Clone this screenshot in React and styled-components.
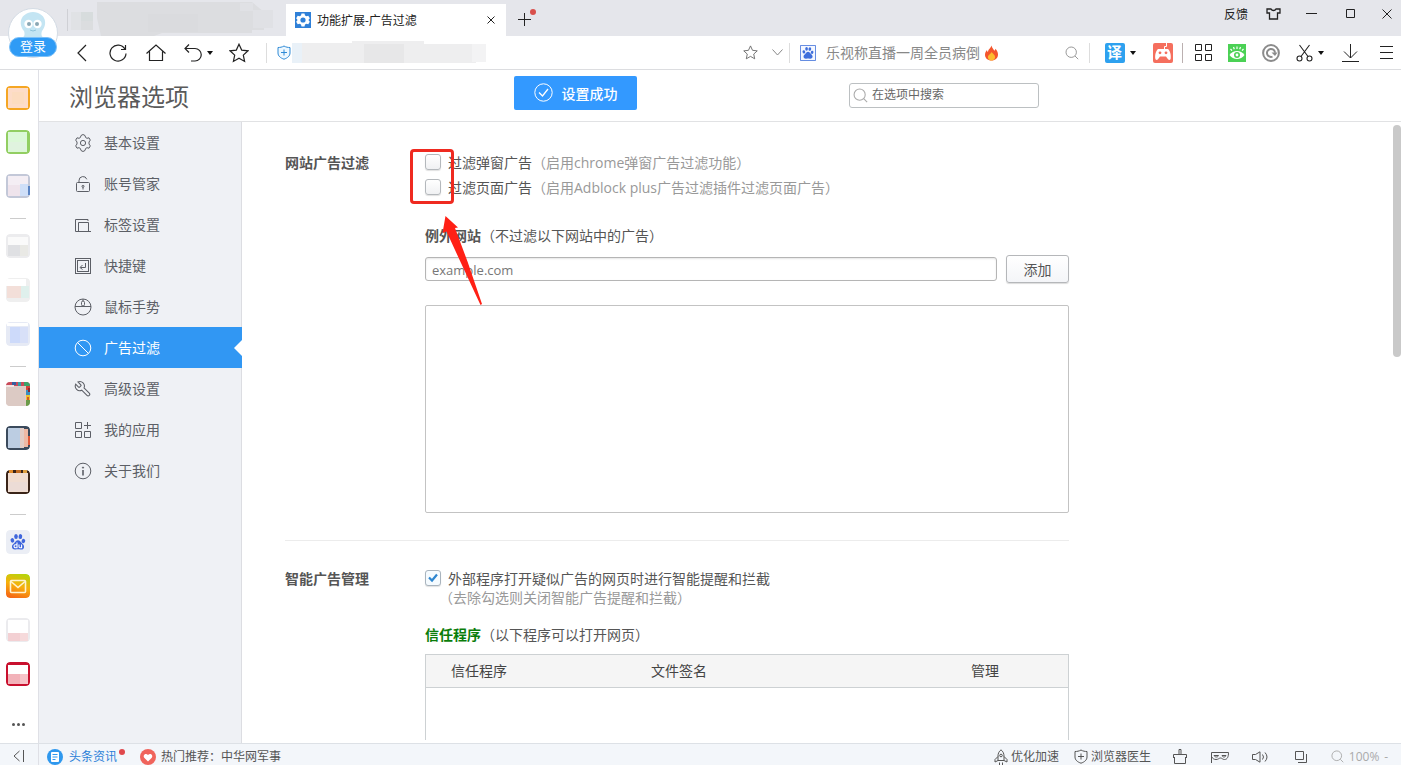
import React, { useState } from "react";
import styled, { createGlobalStyle, css } from "styled-components";

const GlobalStyle = createGlobalStyle`
  *, *::before, *::after { box-sizing: border-box; }
  html, body, #root { height: 100%; }
  body { margin: 0; background: #fff; }
  body, button, input, textarea {
    font-family: "Open Sans", "Noto Sans CJK SC", sans-serif;
    font-size: 14px;
    color: #555;
  }
`;

/* ---------- shared parts ---------- */

const Browser = styled.div`
  display: flex;
  flex-direction: column;
  height: 100vh;
  overflow: hidden;
`;

const Icon = styled.svg.attrs((p) => ({
  fill: p.fill || "none",
  stroke: p.stroke || "currentColor",
  "aria-hidden": true,
}))`
  display: block;
  flex: none;
`;

const IconButton = styled.button`
  display: flex;
  align-items: center;
  justify-content: center;
  gap: 5px;
  flex: none;
  width: ${(p) => p.$w}px;
  height: 100%;
  padding: 0 0 0 ${(p) => p.$indent || 0}px;
  border: 0;
  background: none;
  color: ${(p) => p.$color || "#222"};
  font-size: 12px;
  white-space: nowrap;
`;

const Divider = styled.span`
  flex: none;
  width: 1px;
  height: 20px;
  margin-right: ${(p) => p.$after || 0}px;
  background: ${(p) => p.$color || "#ddd"};
`;

/* ---------- title bar ---------- */

const TitleBar = styled.header`
  position: relative;
  display: flex;
  flex: none;
  height: 36px;
  padding-left: 66px;
  background: #e5e6eb;
`;

const Login = styled.button`
  position: absolute;
  z-index: 2;
  top: 8px;
  left: 8px;
  width: 50px;
  height: 50px;
  padding: 0;
  border: 0;
  background: none;
`;

const LoginLabel = styled.span`
  position: absolute;
  left: 1px;
  right: 1px;
  bottom: 1px;
  height: 20px;
  border: 1px solid #7cc0f8;
  border-radius: 10px;
  background: #2f9bf5;
  color: #fff;
  font-size: 13px;
  line-height: 17px;
  text-align: center;
`;

const BackTab = styled.div`
  flex: none;
  width: 220px;
  overflow: hidden;
`;

const Tab = styled.div`
  display: flex;
  align-items: center;
  align-self: flex-end;
  gap: 6px;
  width: 220px;
  height: 32px;
  padding: 0 2px 0 9px;
  background: #fff;
  color: #222;
  font-size: 12px;
  white-space: nowrap;
`;

const TabTitle = styled.span`
  flex: 1;
`;

const NewTab = styled(IconButton)`
  position: relative;
  padding-top: 3px;
  &::after {
    content: "";
    position: absolute;
    top: 9px;
    right: 6px;
    width: 6px;
    height: 6px;
    border-radius: 3px;
    background: #d9504c;
  }
`;

const WindowControls = styled.div`
  display: flex;
  height: 27px;
  margin-left: auto;
`;

/* ---------- toolbar ---------- */

const Toolbar = styled.nav`
  display: flex;
  align-items: center;
  flex: none;
  height: 34px;
  padding-left: 64px;
  border-bottom: 1px solid #dcdde0;
  background: #fff;
`;

const Address = styled.div`
  display: flex;
  align-items: center;
  flex: 1;
  min-width: 0;
  margin-left: 8px;
  overflow: hidden;
`;

const HotSearch = styled.label`
  display: flex;
  align-items: center;
  flex: none;
  width: 264px;
  padding-left: 10px;
`;

const HotInput = styled.input`
  width: 158px;
  margin-left: 10px;
  padding: 0;
  border: 0;
  outline: 0;
  background: none;
  &::placeholder { color: #888; opacity: 1; }
`;

const Translate = styled.span`
  width: 20px;
  height: 20px;
  border-radius: 2px;
  background: #2ea1ef;
  color: #fff;
  font-size: 15px;
  font-weight: 700;
  line-height: 19px;
  text-align: center;
`;

/* ---------- left rail ---------- */

const Middle = styled.div`
  display: flex;
  flex: 1;
  min-height: 0;
`;

const Rail = styled.aside`
  display: flex;
  flex-direction: column;
  flex: none;
  width: 39px;
  padding: 16px 2px 11px 0;
  border-right: 1px solid #dfe0e6;
  align-items: center;
`;

const RailGroup = styled.div`
  display: flex;
  flex-direction: column;
  gap: 20px;
  & + & {
    margin-top: 20px;
    padding-top: 16px;
    background: linear-gradient(#ccc, #ccc) top center / 16px 1px no-repeat;
  }
`;

const RailButton = styled.button`
  display: block;
  width: 24px;
  height: 24px;
  padding: 0;
  border: 0;
  border-radius: 4px;
  overflow: hidden;
  background: none;
`;

const RailMore = styled.button`
  margin-top: auto;
  padding: 6px;
  border: 0;
  background: none;
  color: #555;
`;

/* ---------- options page ---------- */

const Page = styled.div`
  display: flex;
  flex: 1;
  flex-direction: column;
  min-width: 0;
`;

const PageHeader = styled.div`
  flex: none;
  height: 52px;
  border-bottom: 1px solid #e1e2e4;
`;

const PageHeaderInner = styled.div`
  display: grid;
  grid-template-columns: 445px 123px 1fr;
  align-items: center;
  max-width: 1030px;
  height: 50px;
  padding: 0 30px;
`;

const PageTitle = styled.h1`
  margin: 0;
  padding-top: 4px;
  color: #5a5a5a;
  font-size: 24px;
  font-weight: 400;
  line-height: 36px;
`;

const Toast = styled.div`
  display: flex;
  align-items: center;
  align-self: start;
  justify-content: center;
  gap: 9px;
  height: 34px;
  margin-top: 6px;
  padding-bottom: 1px;
  border-radius: 2px;
  background: #3399ff;
  color: #fff;
  font-weight: 500;
`;

const Field = styled.label`
  display: flex;
  align-items: center;
  justify-self: end;
  width: 190px;
  height: 25px;
  gap: 4px;
  padding: 0 3px;
  border: 1px solid #bcc0c2;
  border-radius: 3px;
`;

const FieldInput = styled.input`
  flex: 1;
  min-width: 0;
  padding: 0 0 2px;
  border: 0;
  outline: 0;
  background: none;
  font-size: 12px;
  &::placeholder { color: #666; opacity: 1; }
`;

const PageBody = styled.div`
  display: flex;
  flex: 1;
  min-height: 0;
`;

const SideMenu = styled.nav`
  flex: none;
  width: 203px;
  border-right: 1px solid #dcdde2;
  background: #eff1f5;
`;

const MenuItem = styled.a`
  position: relative;
  display: flex;
  align-items: center;
  gap: 12px;
  height: 41px;
  padding-left: 35px;
  color: #5c5f66;
  text-decoration: none;
  ${(p) =>
    p.$active &&
    css`
      margin-right: -1px;
      background: #3197f3;
      color: #fff;
      &::after {
        content: "";
        position: absolute;
        right: 0;
        top: 13px;
        border: solid transparent;
        border-width: 8px 8px 8px 0;
        border-right-color: #fff;
      }
    `}
`;

const MenuText = styled.span`
  padding-bottom: 2px;
`;

const Content = styled.main`
  position: relative;
  flex: 1;
  min-width: 0;
  margin-bottom: 3px;
  padding-left: 43px;
  overflow: hidden;
`;

const Section = styled.section`
  display: grid;
  grid-template-columns: 140px 1fr;
  max-width: 784px;
  padding: ${(p) => p.$top}px 0 27px;
  & + & { border-top: 1px solid #ececec; }
`;

const SectionTitle = styled.h2`
  margin: 0;
  font-size: 14px;
  font-weight: 700;
  line-height: 25px;
`;

const SectionBody = styled.div`
  min-width: 0;
`;

const CheckRow = styled.label`
  display: flex;
  align-items: center;
  height: 25px;
  padding-bottom: 2px;
  white-space: nowrap;
`;

const Checkbox = styled.input.attrs({ type: "checkbox" })`
  appearance: none;
  flex: none;
  width: 16px;
  height: 16px;
  margin: 0 7px 0 0;
  border: 1px solid #b4b8bc;
  border-radius: 3px;
  background: linear-gradient(#fff, #f0f1f3);
  box-shadow: 0 1px 1px rgba(0, 0, 0, 0.12);
  &:checked {
    border-color: #a9b4be;
    background: #f5fbff
      url("data:image/svg+xml,%3Csvg xmlns='http://www.w3.org/2000/svg' viewBox='0 0 14 14'%3E%3Cpath d='M3 6.5l3 3 5-6' fill='none' stroke='%232d86d0' stroke-width='2.2'/%3E%3C/svg%3E")
      center / 14px 14px no-repeat;
  }
`;

const Muted = styled.span`
  color: #999;
`;

const Note = styled.p`
  margin: 0;
  padding-left: 14px;
  color: #999;
  line-height: 13px;
`;

const SubTitle = styled.h3`
  margin: ${(p) => p.$top}px 0 8px;
  font-size: 14px;
  font-weight: 400;
  line-height: 23px;
`;

const Strong = styled.strong`
  color: ${(p) => p.$color || "inherit"};
`;

const AddRow = styled.form`
  display: flex;
  align-items: center;
  gap: 9px;
`;

const SiteInput = styled.input`
  flex: 1;
  min-width: 0;
  height: 24px;
  padding: 2px 6px 0;
  border: 1px solid #b5b5b5;
  border-radius: 3px;
  outline: 0;
  box-shadow: inset 0 1px 2px rgba(0, 0, 0, 0.1);
  font-size: 13px;
  &::placeholder { color: #777; opacity: 1; }
`;

const AddButton = styled.button`
  width: 63px;
  height: 28px;
  padding: 0;
  border: 1px solid #b5b7ba;
  border-radius: 3px;
  background: linear-gradient(#fff, #f4f5f8);
  box-shadow: 0 1px 1px rgba(0, 0, 0, 0.14);
`;

const SiteList = styled.textarea`
  display: block;
  width: 100%;
  height: 208px;
  margin-top: 22px;
  border: 1px solid #c3c3c3;
  border-radius: 2px;
  outline: 0;
  resize: none;
`;

const ProgramTable = styled.table`
  width: 100%;
  border: 1px solid #cdd1d3;
  border-spacing: 0;
  table-layout: fixed;
  color: #444;
`;

const Th = styled.th`
  width: ${(p) => (p.$w ? `${p.$w}px` : "auto")};
  height: 33px;
  padding: 0 0 2px 25px;
  border-bottom: 1px solid #cdd1d3;
  background: #f5f5f5;
  font-weight: 400;
  text-align: left;
`;

const EmptyCell = styled.td`
  height: 180px;
`;

const ScrollThumb = styled.div`
  flex: none;
  width: 8px;
  height: 232px;
  margin-top: 3px;
  border-radius: 4px;
  background: #c9c9c9;
`;

const Highlight = styled.div`
  position: absolute;
  left: 168px;
  top: 27px;
  width: 44px;
  height: 55px;
  border: 3px solid #ef2a20;
  border-radius: 4px;
  pointer-events: none;
`;

const Arrow = styled.svg`
  position: absolute;
  left: 198px;
  top: 92px;
  pointer-events: none;
`;

/* ---------- status bar ---------- */

const StatusBar = styled.footer`
  display: flex;
  align-items: center;
  flex: none;
  height: 22px;
  border-top: 1px solid #dde1e6;
  background: #f3f6fa;
  font-size: 12px;
  line-height: 18px;
  white-space: nowrap;
`;

const Collapse = styled(IconButton)`
  padding: 3px 2px 0 0;
  border-right: 1px solid #dfe0e6;
`;

const StatusLink = styled.a`
  position: relative;
  display: flex;
  align-items: center;
  gap: ${(p) => p.$gap || 3}px;
  margin-left: ${(p) => p.$left || 0}px;
  color: ${(p) => p.$color || "#555"};
  text-decoration: none;
  ${(p) =>
    p.$dot &&
    css`
      &::after {
        content: "";
        position: absolute;
        top: 1px;
        right: -8px;
        width: 6px;
        height: 6px;
        border-radius: 3px;
        background: #e0484c;
      }
    `}
`;

const StatusGroup = styled.div`
  display: flex;
  align-items: center;
  height: 100%;
  padding-top: 4px;
  & + & { margin-left: auto; }
`;

const Caret = () => (
  <Icon width="6" height="4" viewBox="0 0 6 4" fill="#111" stroke="none">
    <path d="M0 0h6L3 4z" />
  </Icon>
);

const PawShape = ({ color }) => (
  <g fill={color} stroke="none">
    <ellipse cx="3.4" cy="7.4" rx="1.8" ry="2.3" transform="rotate(-18 3.4 7.4)" />
    <ellipse cx="7" cy="3.4" rx="1.8" ry="2.5" />
    <ellipse cx="11.4" cy="3.6" rx="1.8" ry="2.5" transform="rotate(10 11.4 3.6)" />
    <ellipse cx="14.4" cy="8" rx="1.8" ry="2.2" transform="rotate(18 14.4 8)" />
    <path d="M9 7.2c1.9 0 2.6 1.7 4 3 1.500 1.300 2.400 2.300 2 4.200-.4 1.800-2 2.300-3.500 2.100-1.700-.2-3.300-.2-5 0-1.600.2-3.200-.4-3.500-2.200-.3-1.800.7-2.900 2.100-4.100C6.400 9 7.100 7.200 9 7.200z" />
  </g>
);

const menu = [
  {
    name: "基本设置",
    icon: (
      <>
        <path d="M7 1.500l2-1 2 1 .6 2 1.400.8 2-.5 1.300 2.300-1.300 1.900v2l1.300 1.900L15 14.200l-2-.5-1.400.8-.6 2-2 1-2-1-.6-2-1.400-.8-2 .5-1.300-2.300L3 10V8L1.700 6.100 3 3.800l2 .5 1.400-.8z" />
        <circle cx="9" cy="9" r="2.600" />
      </>
    ),
  },
  {
    name: "账号管家",
    icon: (
      <>
        <rect x="2.500" y="7.500" width="13" height="9" rx="1" />
        <path d="M5 7.500V5.600a4 4 0 0 1 7.800-1.300M9 12v2.500" />
        <circle cx="9" cy="11.300" r="1" />
      </>
    ),
  },
  {
    name: "标签设置",
    icon: <path d="M3.500 15.500h-2v-12h12.500v1.500M4.500 15.500v-9h10v9M3 15.500h14" />,
  },
  {
    name: "快捷键",
    icon: (
      <>
        <rect x="1.500" y="1.500" width="15" height="15" />
        <rect x="3.500" y="3.500" width="11" height="11" />
        <path d="M11.500 6v4.500h-5M8.500 8l-2.500 2.500L8.500 12.500" />
      </>
    ),
  },
  {
    name: "鼠标手势",
    icon: (
      <>
        <circle cx="9" cy="9" r="8" />
        <path d="M1 8.500h16M9 1v2" />
        <rect x="7.500" y="3" width="3" height="5" rx="1.500" />
      </>
    ),
  },
  {
    name: "广告过滤",
    icon: (
      <>
        <circle cx="9" cy="9" r="7.800" />
        <path d="M3.500 3.500l11 11" />
      </>
    ),
  },
  {
    name: "高级设置",
    icon: (
      <path
        transform="translate(18 0) scale(-.76 .76)"
        strokeWidth="1.400"
        d="M14.700 6.300a1 1 0 0 0 0 1.400l1.600 1.600a1 1 0 0 0 1.400 0l3.770-3.770a6 6 0 0 1-7.940 7.940l-6.910 6.910a2.120 2.120 0 0 1-3-3l6.910-6.910a6 6 0 0 1 7.940-7.940l-3.760 3.760z"
      />
    ),
  },
  {
    name: "我的应用",
    icon: (
      <path d="M1.500 1.500h6v6h-6zM1.500 10.500h6v6h-6zM10.500 10.500h6v6h-6zM13.500 1v7M10 4.500h7" />
    ),
  },
  {
    name: "关于我们",
    icon: (
      <>
        <circle cx="9" cy="9" r="7.800" />
        <path d="M9 8v5.500" strokeWidth="1.600" />
        <circle cx="9" cy="5.600" r=".6" fill="currentColor" />
      </>
    ),
  },
];

/* Each tile: outer frame colour plus the coloured blocks inside it. */
const railGroups = [
  [
    { name: "应用一", frame: "#f5a623", blocks: [[2, 2, 20, 20, "#fddcc8"], [6, 6, 12, 12, "#fcdcc0"]] },
    { name: "应用二", frame: "#92ce62", blocks: [[2, 2, 19, 20, "#dcf8d8"], [4, 12, 16, 8, "#e0f3df"]] },
    {
      name: "应用三",
      frame: "#c3c8d8",
      blocks: [[2, 2, 20, 20, "#f4eef4"], [2, 11, 12, 11, "#efe4ec"], [14, 10, 8, 12, "#cfdff8"], [22, 12, 2, 9, "#5b84c4"]],
    },
  ],
  [
    { name: "应用四", frame: "#ececee", blocks: [[2, 3, 20, 8, "#fafafa"], [2, 11, 12, 11, "#dfe0e3"], [14, 11, 8, 11, "#e9e9e5"]] },
    { name: "应用五", frame: "#efefef", blocks: [[0, 1, 20, 7, "#ffffff"], [1, 8, 14, 12, "#f3dfd9"], [15, 8, 8, 12, "#dff0ec"]] },
    { name: "应用六", frame: "#e6eaf5", blocks: [[1, 1, 21, 3, "#ffffff"], [4, 5, 10, 16, "#cddafa"], [14, 5, 8, 16, "#d8e0f8"]] },
  ],
  [
    {
      name: "应用七",
      frame: "#e0cdc8",
      blocks: [
        [0, 0, 24, 4, "#c94a5a"], [0, 3, 8, 2, "#f2e6e4"], [6, 0, 4, 3, "#375fa0"], [12, 0, 3, 4, "#36a0a8"], [18, 0, 6, 4, "#3aa46a"],
        [20, 4, 4, 4, "#d6443a"], [20, 8, 4, 5, "#3a8fc0"], [20, 13, 4, 5, "#f0c030"], [20, 18, 4, 6, "#6a9a48"],
        [22, 6, 2, 4, "#8a2a30"], [21, 15, 2, 3, "#d05a2a"], [0, 5, 19, 19, "#dccac4"],
      ],
    },
    {
      name: "应用八",
      frame: "#3b4a5c",
      blocks: [[2, 2, 12, 20, "#bccde2"], [14, 2, 4, 20, "#e3cdc6"], [18, 3, 4, 18, "#efb9a4"], [22, 10, 2, 9, "#e05a3a"]],
    },
    {
      name: "应用九",
      frame: "#3a2418",
      blocks: [[3, 0, 4, 3, "#e08a2a"], [10, 0, 5, 3, "#c06a20"], [17, 0, 4, 3, "#e0a040"], [2, 3, 20, 19, "#f1ddd0"], [3, 12, 18, 9, "#ecdcd6"]],
    },
  ],
  [
    { name: "百度", kind: "baidu" },
    { name: "邮箱", kind: "mail" },
    { name: "应用十", frame: "#ebebee", blocks: [[2, 2, 20, 13, "#ffffff"], [2, 15, 20, 8, "#f3d0d3"], [14, 15, 8, 8, "#f6dadb"]] },
    { name: "应用十一", frame: "#c8102e", blocks: [[2, 3, 20, 9, "#ffffff"], [2, 12, 12, 10, "#f2b2b9"], [14, 12, 8, 10, "#f7c3c8"]] },
  ],
];

const RailIcon = ({ item }) => {
  if (item.kind === "baidu")
    return (
      <Icon width="24" height="24" viewBox="0 0 24 24" stroke="none">
        <rect width="24" height="24" rx="4" fill="#ebeef5" />
        <g transform="translate(3 3)">
          <PawShape color="#3f66dc" />
          <path
            d="M8 9.500v5.200H6.500a1.400 1.400 0 0 1 0-3H8M10 11.500v2.300c0 .6.300.9.900.9h1.700v-3.200"
            fill="none"
            stroke="#fff"
            strokeWidth="1.100"
          />
        </g>
      </Icon>
    );
  if (item.kind === "mail")
    return (
      <Icon width="24" height="24" viewBox="0 0 24 24" stroke="none">
        <defs>
          <linearGradient id="mail" x1=".7" y1="0" x2=".4" y2="1">
            <stop offset="0" stopColor="#b6d40c" />
            <stop offset=".5" stopColor="#f8b00c" />
            <stop offset="1" stopColor="#f56a14" />
          </linearGradient>
        </defs>
        <rect width="24" height="24" rx="4" fill="url(#mail)" />
        <g fill="none" stroke="#fff3d0" strokeWidth="1.600">
          <rect x="4.500" y="6.500" width="15" height="12" rx="1" />
          <path d="M5 7.500l7 6 7-6" />
        </g>
      </Icon>
    );
  return (
    <Icon width="24" height="24" viewBox="0 0 24 24" stroke="none">
      <rect width="24" height="24" rx="4" fill={item.frame} />
      {item.blocks.map(([x, y, w, h, c], i) => (
        <rect key={i} x={x} y={y} width={w} height={h} fill={c} />
      ))}
    </Icon>
  );
};

const Magnifier = ({ size = 14, color = "#aaa" }) => (
  <Icon width={size} height={size} viewBox="0 0 14 14" stroke={color}>
    <circle cx="6.200" cy="6.200" r="5.200" />
    <path d="M10 10l3.200 3.200" />
  </Icon>
);

const Shield = ({ color = "currentColor", fill }) => (
  <Icon width="14" height="15" viewBox="0 0 14 15" stroke={color} fill={fill}>
    <path d="M7 1c2 1.200 4 1.500 6 1.500V8c0 3-2.500 5-6 6.200C3.500 13 1 11 1 8V2.500C3 2.500 5 2.200 7 1zM7 4.500v6M4 7.500h6" />
  </Icon>
);

const Star = ({ size, color }) => (
  <Icon width={size} height={size} viewBox="0 0 20 20" stroke={color} strokeWidth="1.200">
    <path d="M10 1.200l2.700 5.900 6.300.7-4.700 4.300 1.300 6.300L10 15.200l-5.600 3.200 1.300-6.300L1 7.800l6.300-.7z" />
  </Icon>
);

const TitleArea = () => (
  <TitleBar>
    <Login aria-label="登录">
      <Icon width="50" height="50" viewBox="0 0 50 50" stroke="none">
        <circle cx="25" cy="25" r="24.500" fill="#fff" stroke="#d3dbe4" />
        <path d="M13 30c4-1 4-4 3-7-6-7-4-18 9-19 13 1 15 12 9 19-1 3-1 6 3 7l-1 5H13z" fill="#c4e5f3" />
        <circle cx="20.500" cy="16" r="4.200" fill="#fff" />
        <circle cx="29.500" cy="16" r="4.200" fill="#fff" />
        <circle cx="21" cy="16" r="2" fill="#8aa7b4" />
        <circle cx="29" cy="16" r="2" fill="#8aa7b4" />
        <path d="M22 22q3 2 6 0" fill="none" stroke="#8fc3da" />
      </Icon>
      <LoginLabel>登录</LoginLabel>
    </Login>
    <BackTab>
      <Icon width="220" height="36" viewBox="0 0 220 36" stroke="none">
        <path d="M1 9h1v22H1z" fill="#cfd0d5" />
        <path d="M5 12h10v18H5z" fill="#e0e2e5" />
        <path d="M15 12h12v9H15z" fill="#d7dcdd" />
        <path d="M15 21h12v9H15z" fill="#dbdddf" />
        <path d="M31 2h155l12 10v18h-12v3h-90l-8 3H35l-4-18z" fill="#dcdde0" />
        <path d="M82 14h50v18H82z" fill="#dadbde" />
        <path d="M174 3h13v8h-13zM187 10h20v18h-20z" fill="#e0e1e5" />
      </Icon>
    </BackTab>
    <Tab>
      <Icon width="16" height="16" viewBox="0 0 16 16" stroke="none">
        <path d="M0 0h16v16H0z" fill="#2f80d8" />
        <path d="M6.500 1.500h3l.5 1.900 1.400.8 1.900-.5 1.500 2.500L13.400 8l1.400 1.800-1.500 2.500-1.900-.5-1.400.8-.5 1.900h-3L6 12.600l-1.400-.8-1.900.5-1.500-2.500L2.600 8 1.200 6.200l1.500-2.500 1.900.5L6 3.400z" fill="#fff" />
        <circle cx="8" cy="8" r="2.600" fill="#2f80d8" />
      </Icon>
      <TabTitle>功能扩展-广告过滤</TabTitle>
      <IconButton $w={26} aria-label="关闭标签">
        <Icon width="8" height="8" viewBox="0 0 8 8">
          <path d="M.5.5l7 7m0-7l-7 7" />
        </Icon>
      </IconButton>
    </Tab>
    <NewTab $w={36} aria-label="新建标签">
      <Icon width="13" height="13" viewBox="0 0 13 13">
        <path d="M6.500 0v13M0 6.500h13" />
      </Icon>
    </NewTab>
    <WindowControls>
      <IconButton $w={30}>反馈</IconButton>
      <IconButton $w={44} aria-label="皮肤">
        <Icon width="15" height="12" viewBox="0 0 15 12" strokeWidth="1.300">
          <path d="M5 1H1v4h2.500v6h8V5H14V1h-4c-1 2-4 2-5 0z" />
        </Icon>
      </IconButton>
      <IconButton $w={32} aria-label="最小化">
        <Icon width="11" height="11" viewBox="0 0 11 11">
          <path d="M0 5.500h11" />
        </Icon>
      </IconButton>
      <IconButton $w={46} aria-label="最大化">
        <Icon width="9" height="9" viewBox="0 0 9 9">
          <path d="M.5.500h8v8h-8z" />
        </Icon>
      </IconButton>
      <IconButton $w={28} aria-label="关闭">
        <Icon width="10" height="10" viewBox="0 0 10 10">
          <path d="M.5.500l9 9m0-9l-9 9" />
        </Icon>
      </IconButton>
    </WindowControls>
  </TitleBar>
);

const ToolbarArea = () => (
  <Toolbar>
    <IconButton $w={36} aria-label="后退">
      <Icon width="10" height="18" viewBox="0 0 10 18" strokeWidth="1.200">
        <path d="M9 1L1 9l8 8" />
      </Icon>
    </IconButton>
    <IconButton $w={36} aria-label="刷新">
      <Icon width="18" height="18" viewBox="0 0 18 18" strokeWidth="1.200">
        <path d="M15.900 5A8 8 0 1 0 17 9.500M16.500 1v4.500H12" />
      </Icon>
    </IconButton>
    <IconButton $w={40} aria-label="主页">
      <Icon width="20" height="18" viewBox="0 0 20 18" strokeWidth="1.200">
        <path d="M.5 9.500L10 1l9.500 8.500M3.500 7.500v9h13v-9" />
      </Icon>
    </IconButton>
    <IconButton $w={44} aria-label="撤销">
      <Icon width="18" height="18" viewBox="0 0 18 18" strokeWidth="1.200">
        <path d="M5 .5l-4 4 4 4M1 4.500h10a6 6 0 0 1 0 12.500H7" />
      </Icon>
      <Caret />
    </IconButton>
    <IconButton $w={38} aria-label="收藏">
      <Star size="20" />
    </IconButton>
    <Address>
      <Divider $after={9} />
      <IconButton $w={16} aria-label="安全">
        <Shield color="#2f8ad6" fill="#eef8ff" />
      </IconButton>
      <Icon width="194" height="24" viewBox="0 0 194 24" stroke="none">
        <path d="M0 2h60V0h72v3h62v18h-10v1H0z" fill="#eeeeef" />
        <path d="M0 2h10v20H0z" fill="#e9f1f8" />
        <path d="M72 3h40v19H72z" fill="#e7e7e8" />
        <path d="M180 3h14v18h-14z" fill="#f3f3f4" />
      </Icon>
    </Address>
    <IconButton $w={30} aria-label="收藏本页">
      <Star size="15" color="#666" />
    </IconButton>
    <IconButton $w={24} aria-label="展开地址栏">
      <Icon width="11" height="7" viewBox="0 0 11 7" stroke="#888">
        <path d="M.5.500l5 5.500 5-5.500" />
      </Icon>
    </IconButton>
    <Divider />
    <HotSearch>
      <Icon width="16" height="16" viewBox="0 0 18 18" stroke="#4a78dc">
        <path d="M.5.500h17v17H.5z" fill="#f4f7ff" />
        <g transform="translate(1.500 1.500) scale(.84)">
          <PawShape color="#3f6fdc" />
        </g>
      </Icon>
      <HotInput placeholder="乐视称直播一周全员病倒" aria-label="搜索" />
      <Icon width="15" height="16" viewBox="0 0 15 16" stroke="none">
        <path d="M7.500.5c.3 2.500 2 3.200 2.800 5.200.8-.5 1-1.200 1-2 1.800 1.500 2.700 3.600 2.700 5.800 0 3.600-2.700 6-6.500 6S1 13.100 1 9.700c0-2 1-3.400 2-4.700 0 1 .3 1.600.9 2C4.200 4 6.800 3.200 7.500.5z" fill="#f4552c" />
        <path d="M7.500 7c1 1.500 3.600 2.500 3.600 5 0 2-1.500 3.500-3.600 3.500S3.900 14 3.900 12.200C3.900 9.800 7 9 7.500 7z" fill="#fdbb2e" />
      </Icon>
    </HotSearch>
    <IconButton $w={35} aria-label="搜索">
      <Magnifier color="#999" />
    </IconButton>
    <Divider />
    <IconButton $w={53} $indent={7} aria-label="翻译">
      <Translate>译</Translate>
      <Caret />
    </IconButton>
    <IconButton $w={39} aria-label="游戏">
      <Icon width="20" height="20" viewBox="0 0 20 20" stroke="none">
        <rect width="20" height="20" rx="2" fill="#f56f5e" />
        <path d="M5 6h10c2 1.500 3.200 6 2.700 9.500-.2 1.800-1.800 1.800-2.700.7L13 13.500H7l-2 2.700c-.9 1.100-2.500 1.100-2.700-.7C1.800 12 3 7.500 5 6z" fill="#fff" />
        <path d="M11.500 6V3.500h2V0" fill="none" stroke="#fff" />
        <circle cx="7" cy="9.800" r="1.400" fill="#f56f5e" />
        <circle cx="13" cy="9.800" r="1.400" fill="#f56f5e" />
      </Icon>
    </IconButton>
    <Divider $color="#bbb0b0" />
    <IconButton $w={40} aria-label="应用中心">
      <Icon width="17" height="17" viewBox="0 0 17 17">
        <path d="M.5.500h6v6h-6zM10.500.500h6v6h-6zM.5 10.500h6v6h-6zM10.500 10.500h6v6h-6z" />
      </Icon>
    </IconButton>
    <IconButton $w={28} aria-label="护眼模式">
      <Icon width="18" height="18" viewBox="0 0 18 18" stroke="none">
        <path d="M0 0h18v18H0z" fill="#4bd155" />
        <path d="M1.500 11c3.500-5.300 11.500-5.300 15 0-3.500 5.300-11.500 5.300-15 0z" fill="#fff" />
        <circle cx="9" cy="11" r="3" fill="#4bd155" />
        <circle cx="9" cy="11" r="1.400" fill="#fff" />
        <path d="M9 2.500v2.500M5.500 3l.8 2.200M12.500 3l-.8 2.200M2.500 5l1.500 1.700M15.500 5L14 6.700" fill="none" stroke="#fff" strokeWidth="1.200" />
      </Icon>
    </IconButton>
    <IconButton $w={40} aria-label="刷新助手">
      <Icon width="18" height="18" viewBox="0 0 18 18" stroke="#8b8b8b">
        <circle cx="9" cy="9" r="7.900" strokeWidth="2" />
        <path d="M10.500 12.600A4 4 0 1 1 13 8.800" strokeWidth="2" />
        <path d="M9.500 8.500h6L13 12z" fill="#8b8b8b" stroke="none" />
      </Icon>
    </IconButton>
    <IconButton $w={38} aria-label="截图">
      <Icon width="17" height="18" viewBox="0 0 17 18" strokeWidth="1.100">
        <path d="M3.500 1l8.500 11.500M13.500 1L5 12.500" />
        <circle cx="3.500" cy="14.500" r="2.500" />
        <circle cx="13.500" cy="14.500" r="2.500" />
      </Icon>
      <Caret />
    </IconButton>
    <IconButton $w={43} aria-label="下载">
      <Icon width="17" height="18" viewBox="0 0 17 18">
        <path d="M8.500 0v14M2 7.500l6.500 6.500L15 7.500M0 17.500h17" />
      </Icon>
    </IconButton>
    <IconButton $w={29} aria-label="菜单">
      <Icon width="13" height="13" viewBox="0 0 13 13">
        <path d="M0 .5h13M0 6.500h13M0 12.500h13" />
      </Icon>
    </IconButton>
  </Toolbar>
);

const StatusArea = () => (
  <StatusBar>
    <Collapse $w={39} $color="#555" aria-label="收起侧栏">
      <Icon width="11" height="12" viewBox="0 0 11 12">
        <path d="M6.500 1L1 6l5.500 5M10.500 0v12" />
      </Icon>
    </Collapse>
    <StatusGroup>
      <StatusLink href="#news" $left={8} $gap={6} $color="#2b7fd8" $dot>
        <Icon width="16" height="16" viewBox="0 0 16 16" stroke="none">
          <circle cx="8" cy="8" r="8" fill="#2f98ee" />
          <rect x="4" y="3" width="8" height="10" rx="1" fill="#fff" />
          <path d="M5.500 5.500h5M5.500 8h5M5.500 10.500h3" stroke="#2f98ee" />
        </Icon>
        头条资讯
      </StatusLink>
      <StatusLink href="#hot" $left={23} $gap={5}>
        <Icon width="16" height="16" viewBox="0 0 16 16" stroke="none">
          <circle cx="8" cy="8" r="8" fill="#f0645c" />
          <path d="M8 12.500L4.200 8.700C2.500 6.500 5.500 3.500 8 6c2.500-2.500 5.500.5 3.800 2.700z" fill="#fff" />
        </Icon>
        热门推荐：中华网军事
      </StatusLink>
    </StatusGroup>
    <StatusGroup>
      <StatusLink href="#speed">
        <Icon width="14" height="16" viewBox="0 0 14 16">
          <path d="M7 .8c2.200 1.700 3 4 3 6.200v4.500H4V7c0-2.200.8-4.500 3-6.200zM4 7.500l-3 3v2.500l3-1.500M10 7.500l3 3v2.500l-3-1.500M5.500 13.500V16M8.500 13.500V16" />
          <circle cx="7" cy="6.500" r="1.300" />
        </Icon>
        优化加速
      </StatusLink>
      <StatusLink href="#doctor" $left={15}>
        <Shield />
        浏览器医生
      </StatusLink>
      <IconButton $w={58} $color="#555" aria-label="清理">
        <Icon width="16" height="15" viewBox="0 0 16 15">
          <path d="M7 5.500v-5h2v5M1.500 9V5.500h13V9M2.500 8v6.500h11V8" />
        </Icon>
      </IconButton>
      <IconButton $w={22} $color="#555" aria-label="无痕模式">
        <Icon width="18" height="12" viewBox="0 0 18 12">
          <path d="M.5 12V1.500h17c0 4-1 7-4 7-2 0-2.500-1.500-4-1.500s-2 1.500-4.500 1.500c-2 0-3.500-1-4.500-3M3 4.500h4.500c-.5 2-3.500 2-4.500 0zM11 4.500h4c-.5 2-3.500 2-4 0z" />
        </Icon>
      </IconButton>
      <IconButton $w={58} $color="#555" aria-label="声音">
        <Icon width="16" height="12" viewBox="0 0 16 12">
          <path d="M.5 3.500h3L8 .8v10.400L3.500 8.500h-3zM10.500 3.500q2 2.500 0 5M13 1.500q4 4.500 0 9" />
        </Icon>
      </IconButton>
      <IconButton $w={24} $color="#555" aria-label="分屏">
        <Icon width="12" height="12" viewBox="0 0 12 12">
          <path d="M.5.500h8v8h-8zM11.500 3v8.500H3" />
        </Icon>
      </IconButton>
      <IconButton $w={88} $indent={5} $color="#aaa" aria-label="缩放比例">
        <Magnifier size={13} />
        100%
        <span>-</span>
      </IconButton>
    </StatusGroup>
  </StatusBar>
);

export default function App() {
  const [popup, setPopup] = useState(false);
  const [pageAds, setPageAds] = useState(false);
  const [smart, setSmart] = useState(true);

  return (
    <Browser>
      <GlobalStyle />
      <TitleArea />
      <ToolbarArea />
      <Middle>
        <Rail>
          {railGroups.map((group, i) => (
            <RailGroup key={i}>
              {group.map((item) => (
                <RailButton key={item.name} aria-label={item.name}>
                  <RailIcon item={item} />
                </RailButton>
              ))}
            </RailGroup>
          ))}
          <RailMore aria-label="更多">
            <Icon width="13" height="3" viewBox="0 0 13 3" fill="currentColor" stroke="none">
              <circle cx="1.500" cy="1.500" r="1.500" />
              <circle cx="6.500" cy="1.500" r="1.500" />
              <circle cx="11.500" cy="1.500" r="1.500" />
            </Icon>
          </RailMore>
        </Rail>
        <Page>
          <PageHeader>
            <PageHeaderInner>
              <PageTitle>浏览器选项</PageTitle>
              <Toast role="status">
                <Icon width="19" height="19" viewBox="0 0 19 19">
                  <circle cx="9.500" cy="9.500" r="8.700" />
                  <path d="M5 9.500l3.500 3.500 5.500-7" strokeWidth="1.300" />
                </Icon>
                设置成功
              </Toast>
              <Field>
                <Magnifier size={15} />
                <FieldInput placeholder="在选项中搜索" aria-label="在选项中搜索" />
              </Field>
            </PageHeaderInner>
          </PageHeader>
          <PageBody>
            <SideMenu>
              {menu.map((item) => (
                <MenuItem
                  key={item.name}
                  href={`#${item.name}`}
                  $active={item.name === "广告过滤"}
                >
                  <Icon width="18" height="18" viewBox="0 0 18 18">
                    {item.icon}
                  </Icon>
                  <MenuText>{item.name}</MenuText>
                </MenuItem>
              ))}
            </SideMenu>
            <Content>
              <Section $top={28}>
                <SectionTitle>网站广告过滤</SectionTitle>
                <SectionBody>
                  <CheckRow>
                    <Checkbox checked={popup} onChange={(e) => setPopup(e.target.checked)} />
                    过滤弹窗广告
                    <Muted>（启用chrome弹窗广告过滤功能）</Muted>
                  </CheckRow>
                  <CheckRow>
                    <Checkbox checked={pageAds} onChange={(e) => setPageAds(e.target.checked)} />
                    过滤页面广告
                    <Muted>（启用Adblock plus广告过滤插件过滤页面广告）</Muted>
                  </CheckRow>
                  <SubTitle $top={24}>
                    <Strong>例外网站</Strong>（不过滤以下网站中的广告）
                  </SubTitle>
                  <AddRow onSubmit={(e) => e.preventDefault()}>
                    <SiteInput placeholder="example.com" aria-label="例外网站" />
                    <AddButton>添加</AddButton>
                  </AddRow>
                  <SiteList aria-label="例外网站列表" />
                </SectionBody>
              </Section>
              <Section $top={25}>
                <SectionTitle>智能广告管理</SectionTitle>
                <SectionBody>
                  <CheckRow>
                    <Checkbox checked={smart} onChange={(e) => setSmart(e.target.checked)} />
                    外部程序打开疑似广告的网页时进行智能提醒和拦截
                  </CheckRow>
                  <Note>（去除勾选则关闭智能广告提醒和拦截）</Note>
                  <SubTitle $top={19}>
                    <Strong $color="#0a7d0a">信任程序</Strong>（以下程序可以打开网页）
                  </SubTitle>
                  <ProgramTable>
                    <thead>
                      <tr>
                        <Th $w={200}>信任程序</Th>
                        <Th $w={320}>文件签名</Th>
                        <Th>管理</Th>
                      </tr>
                    </thead>
                    <tbody>
                      <tr>
                        <EmptyCell colSpan={3} />
                      </tr>
                    </tbody>
                  </ProgramTable>
                </SectionBody>
              </Section>
              <Highlight />
              <Arrow width="44" height="94" viewBox="0 0 44 94" fill="#ff2015">
                <path d="M5.500 2L18 13.500l-3 .5 12.500 33.500L42 90l-1.500 1L21 49 6.500 17.500l-4 1.500z" />
              </Arrow>
            </Content>
            <ScrollThumb />
          </PageBody>
        </Page>
      </Middle>
      <StatusArea />
    </Browser>
  );
}
